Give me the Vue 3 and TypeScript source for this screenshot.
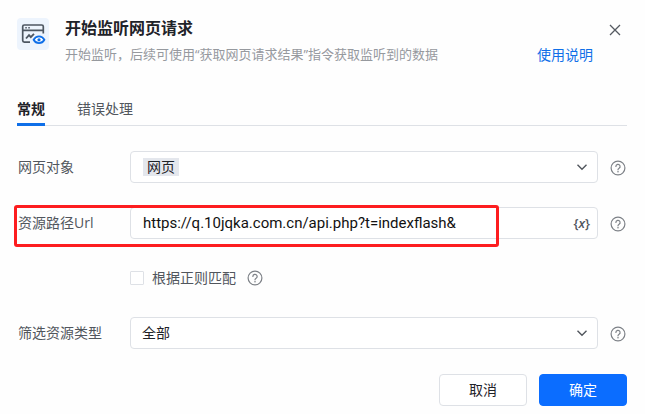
<script setup lang="ts">
import { ref } from 'vue'

const tabs: string[] = ['常规', '错误处理']
const activeTab = ref<string>('常规')
const target = ref<string>('网页')
const url = ref<string>('https://q.10jqka.com.cn/api.php?t=indexflash&')
const useRegex = ref<boolean>(false)
const resourceType = ref<string>('全部')
</script>

<template>
  <main class="dialog">
    <svg class="defs" width="0" height="0" aria-hidden="true">
      <symbol id="help" viewBox="0 0 16 16">
        <circle cx="8" cy="8" r="6.9" fill="none" stroke="currentColor" stroke-width="1.2" />
        <path d="M5.900 6.500a2.100 2.100 0 1 1 3.200 1.700C8.300 8.700 8 9 8 9.800" fill="none" stroke="currentColor" stroke-width="1.200" stroke-linecap="round" />
        <circle cx="8" cy="11.700" r=".8" fill="currentColor" />
      </symbol>
      <symbol id="chevron" viewBox="0 0 12 12">
        <path d="M1.500 3.800L6 8.200l4.500-4.400" fill="none" stroke="currentColor" stroke-width="1.400" />
      </symbol>
    </svg>

    <header class="header">
      <div class="badge">
        <svg width="32" height="32" viewBox="0 0 32 32" fill="none" aria-hidden="true">
          <path d="M13 24.200H7.300a1.600 1.600 0 0 1-1.600-1.600V8.600A1.600 1.600 0 0 1 7.300 7h17.400a1.600 1.600 0 0 1 1.600 1.600v6.800M5.700 12.400h20.600" stroke="#4d5661" stroke-width="1.700" />
          <path d="M8.300 9.700h1.500M11.300 9.700h1.500" stroke="#4d5661" stroke-width="1.400" />
          <path d="M9 20.500l3-3.300 1.800 2 3.200-3.400" stroke="#4d5661" stroke-width="1.800" />
          <path d="M16.600 21.800c1.300-2.300 3.100-3.400 5.400-3.400s4.100 1.100 5.400 3.400c-1.300 2.300-3.100 3.400-5.400 3.400s-4.100-1.100-5.400-3.400z" fill="#fff" stroke="#0f6fe8" stroke-width="1.800" />
          <circle cx="22" cy="21.800" r="1.600" fill="#0f6fe8" />
        </svg>
      </div>
      <div class="heading">
        <h1>开始监听网页请求</h1>
        <p>开始监听，后续可使用“获取网页请求结果”指令获取监听到的数据</p>
      </div>
      <div class="actions">
        <button class="close" type="button" aria-label="关闭">
          <svg width="12" height="12" viewBox="0 0 12 12" aria-hidden="true">
            <path d="M1 1l10 10M11 1L1 11" stroke="#555a61" stroke-width="1.300" />
          </svg>
        </button>
        <a href="#">使用说明</a>
      </div>
    </header>

    <nav class="tabs" role="tablist">
      <button
        v-for="tab in tabs"
        :key="tab"
        type="button"
        role="tab"
        :aria-selected="activeTab === tab"
        :class="{ active: activeTab === tab }"
        @click="activeTab = tab"
      >{{ tab }}</button>
    </nav>

    <form @submit.prevent>
      <div class="row">
        <label for="target">网页对象</label>
        <div class="field">
          <select id="target" v-model="target" class="tagged">
            <option>网页</option>
          </select>
          <svg class="chevron" aria-hidden="true"><use href="#chevron" /></svg>
        </div>
        <svg class="help" aria-hidden="true"><use href="#help" /></svg>
      </div>

      <div class="row marked">
        <label for="url">资源路径Url</label>
        <div class="field">
          <input id="url" v-model="url" type="text" />
          <button class="variable" type="button">{<i>x</i>}</button>
        </div>
        <svg class="help" aria-hidden="true"><use href="#help" /></svg>
      </div>

      <div class="option">
        <input id="regex" v-model="useRegex" type="checkbox" />
        <label for="regex">根据正则匹配</label>
        <svg class="help" aria-hidden="true"><use href="#help" /></svg>
      </div>

      <div class="row">
        <label for="type">筛选资源类型</label>
        <div class="field">
          <select id="type" v-model="resourceType">
            <option>全部</option>
          </select>
          <svg class="chevron" aria-hidden="true"><use href="#chevron" /></svg>
        </div>
        <svg class="help" aria-hidden="true"><use href="#help" /></svg>
      </div>

      <footer>
        <button type="button">取消</button>
        <button type="submit" class="primary">确定</button>
      </footer>
    </form>
  </main>
</template>

<style>
body {
  background: #fefefe;
}
</style>

<style scoped>
.dialog {
  padding: 18px 18px 8px 17px;
  font: 14px/20px "Open Sans", "Noto Sans CJK SC", sans-serif;
  color: #1f2329;
}

.dialog * {
  box-sizing: border-box;
}

.defs {
  position: absolute;
}

button,
input,
select {
  font: inherit;
  color: inherit;
}

button {
  padding: 0;
  border: 0;
  background: none;
  cursor: pointer;
}

.header {
  display: flex;
  gap: 16px;
}

.badge {
  width: 32px;
  height: 32px;
  border-radius: 4px;
  background: #edf4fd;
}

.heading {
  flex: 1;
}

h1 {
  margin: 0 0 6px;
  font-size: 16px;
  line-height: 20px;
  font-weight: 700;
}

p {
  margin: 0;
  font-size: 13px;
  line-height: 20px;
  color: #96999e;
  white-space: nowrap;
}

.actions {
  display: flex;
  flex-direction: column;
  align-items: flex-end;
  gap: 3px;
}

.close {
  display: grid;
  place-items: center;
  width: 24px;
  height: 24px;
}

.actions a {
  margin-right: 34px;
  line-height: 20px;
  color: #0f6fe8;
  text-decoration: none;
}

.tabs {
  display: flex;
  gap: 32px;
  margin-top: 28px;
  box-shadow: inset 0 -1px #dee1e6;
}

.tabs button {
  height: 33px;
  padding-top: 2px;
  border-bottom: 3px solid transparent;
  color: #51565d;
}

.tabs .active {
  border-color: #0f6fe8;
  color: #1f2329;
  font-weight: 700;
}

form {
  display: flex;
  flex-direction: column;
  gap: 24px;
  padding-top: 25px;
}

.row {
  display: grid;
  grid-template-columns: 112px 1fr 17px;
  column-gap: 12px;
  align-items: center;
  position: relative;
}

.row > label {
  padding-left: 1px;
  color: #51565d;
  white-space: nowrap;
}

.row .field {
  margin-left: -11px;
}

.marked::after {
  content: "";
  position: absolute;
  top: -2px;
  right: 128px;
  bottom: -8px;
  left: -3px;
  border: 3px solid #fd1d1f;
  border-radius: 3px;
  pointer-events: none;
}

.field {
  display: grid;
  align-items: center;
}

.field > * {
  grid-area: 1 / 1;
}

.field select,
.field input {
  width: 100%;
  height: 32px;
  padding: 0 36px 0 11px;
  border: 1px solid #dee1e6;
  border-radius: 4px;
  background: #fff;
  appearance: none;
  outline: none;
}

.field input {
  padding-left: 12px;
  font-family: Roboto, "Noto Sans CJK SC", sans-serif;
  font-size: 15px;
  color: #111;
}

.field .tagged {
  padding-left: 16px;
  background: linear-gradient(#e4e7ed, #e4e7ed) 12px center / 36px 18px no-repeat #fff;
}

.chevron {
  justify-self: end;
  width: 12px;
  height: 12px;
  margin-right: 10px;
  color: #51565d;
  pointer-events: none;
}

.variable {
  justify-self: end;
  margin-right: 8px;
  font-size: 13px;
  font-weight: 600;
  color: #51565d;
}

.help {
  width: 16px;
  height: 16px;
  color: #7d8187;
}

.row .help {
  margin-top: 2px;
}

.option {
  display: flex;
  align-items: center;
  height: 30px;
  padding-left: 113px;
  color: #51565d;
}

.option input {
  width: 14px;
  height: 14px;
  margin: 0 8px 0 0;
  border: 1px solid #dee1e6;
  border-radius: 1px;
  background: #fff;
  appearance: none;
}

.option input:checked {
  background: #0f6fe8;
}

.option .help {
  margin-left: 11px;
}

footer {
  display: flex;
  justify-content: flex-end;
  gap: 12px;
  padding-top: 1px;
}

footer button {
  width: 88px;
  height: 32px;
  border: 1px solid #dee1e6;
  border-radius: 4px;
  background: #fff;
}

footer .primary {
  border-color: #0b6dff;
  background: #0b6dff;
  color: #fff;
}
</style>
